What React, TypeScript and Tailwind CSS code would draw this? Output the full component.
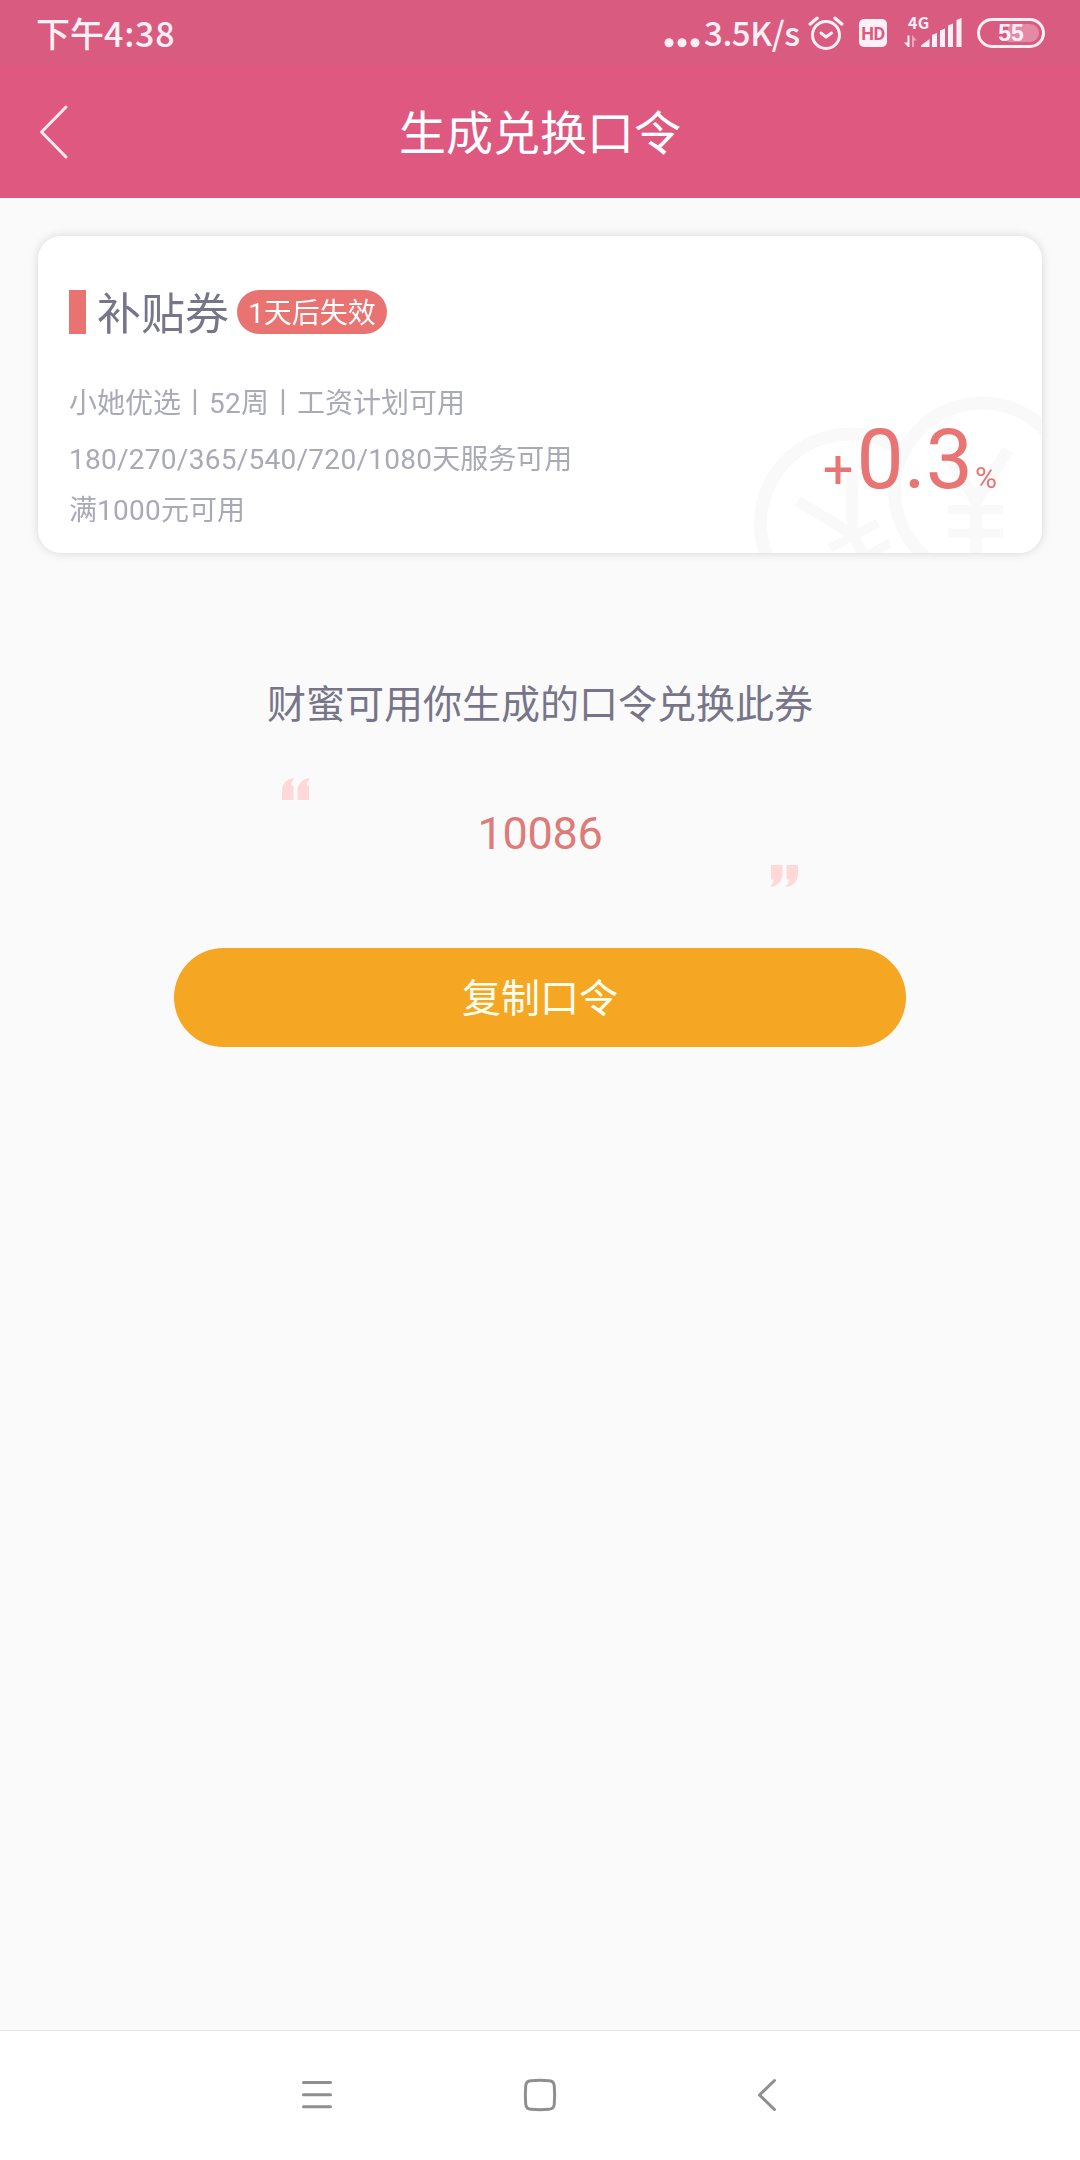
import React from "react";

const sans = "font-[Roboto,'Noto_Sans_CJK_SC',sans-serif]";

function StatusBar() {
  return (
    <div className="flex h-[66px] items-start bg-[#d95c80] pl-[36px] pr-[35px] font-['Noto_Sans_CJK_SC',sans-serif] font-medium text-[#fff0f6]">
      <div className="mt-[9px] text-[34px] leading-[48px]">
        下午<span className="tracking-[0.8px]">4:38</span>
      </div>
      <svg className="ml-auto mr-[4px] mt-[38px] h-[10px] w-[36px]" viewBox="0 0 36 10" fill="currentColor">
        <circle cx="5" cy="4.7" r="4.5" />
        <circle cx="18" cy="4.7" r="4.5" />
        <circle cx="31" cy="4.7" r="4.5" />
      </svg>
      <div className="mt-[8px] w-[96px] whitespace-nowrap text-[33px] leading-[48px] tracking-[-0.4px]">3.5K/s</div>
      <svg className="ml-[8px] mt-[15px] h-[36px] w-[36px]" viewBox="0 0 36 36" fill="none" stroke="currentColor" strokeWidth="3" strokeLinecap="round" strokeLinejoin="round">
        <circle cx="18" cy="20" r="13.5" />
        <path d="M2.2 9 L9 3.2 M33.8 9 L27 3.2" strokeWidth="3.4" />
        <path d="M13 18 L18 22 L23.5 18" />
      </svg>
      <div className="ml-[15px] mt-[19px] flex h-[28px] w-[28px] items-center justify-center rounded-[5px] bg-[#fff0f6] pt-px font-[Roboto,sans-serif] text-[18px] font-bold leading-none tracking-[-0.4px] text-[#d95c80]">HD</div>
      <div className="ml-[17px] mt-[16px] flex h-[32px] w-[58px] flex-col">
        <div className="ml-[4px] h-[13px] font-['Noto_Sans_CJK_SC',sans-serif] text-[16px] font-bold leading-[12px] tracking-[0.4px]">4G</div>
        <svg className="-mt-[12px] h-[32px] w-[58px] shrink-0" viewBox="0 0 58 32" fill="currentColor">
          <path d="M17 31 v-1.5 L25.5 23 V31Z M28 31V19l5-2v14Z M36 31V14.5l5-2V31Z M44 31V9.5l5-2V31Z M52.5 31V4l5-2V31Z" />
          <path d="M3.5 19.5h2V31h-1.5L0 26.5h3.5Z" />
          <path d="M8 31V19l5 5.5h-3V31Z" opacity=".5" />
        </svg>
      </div>
      <div className="ml-[15px] mt-[18px] flex h-[30px] w-[68px] items-center rounded-full border-[3px] border-[#fff0f6] p-[3px]">
        <div className="flex h-[18px] w-full items-center justify-center rounded-full bg-gradient-to-r from-transparent from-45% to-[#e58aa6] to-45% pt-px font-['Liberation_Sans',sans-serif] text-[23px] font-bold leading-none">55</div>
      </div>
    </div>
  );
}

function Header() {
  return (
    <header className="grid h-[132px] grid-cols-[120px_1fr_120px] items-center bg-[#df5880] text-white">
      <svg className="ml-[37px] h-[56px] w-[32px]" viewBox="0 0 32 56" fill="none" stroke="#ffeaf2" strokeWidth="3" strokeLinecap="round" strokeLinejoin="round">
        <path d="M29 3 L4.5 28 L29 53" />
      </svg>
      <h1 className="pt-[4px] text-center text-[47px] leading-[60px]">生成兑换口令</h1>
    </header>
  );
}

function Coins() {
  return (
    <svg className="absolute bottom-0 right-0 h-[166px] w-[292px]" viewBox="750 386 292 166" fill="none" stroke="#f9f9f9" strokeWidth="13">
      <circle cx="850" cy="522.500" r="89.500" />
      <path d="M852 470V533 M798 500L852 533L874 572" strokeWidth="11" />
      <path d="M830 547L878 522 M842 568L890 542" strokeWidth="9" />
      <circle cx="982" cy="489.500" r="87.500" fill="#fff" />
      <path d="M945 449L976 500L1008 449 M976 498V556" strokeWidth="12" />
      <path d="M948 508.500H1003 M948 532H1003" strokeWidth="9" />
    </svg>
  );
}

function Digits({ children }: { children: string }) {
  return <span className="tracking-[0.27px]">{children}</span>;
}

function Coupon() {
  return (
    <section className="relative ml-[38px] mt-[38px] h-[317px] w-[1004px] overflow-hidden rounded-[23px] bg-white pl-[31px] pt-[54px]">
      <Coins />
      <div className="relative flex h-[44px] items-center">
        <div className="h-[44px] w-[17px] bg-[#e97371]" />
        <h2 className="ml-[11px] w-[132px] whitespace-nowrap pt-[5px] text-[44px] leading-[44px] text-[#76758a]">补贴券</h2>
        <div className="ml-[8px] flex h-[44px] w-[150px] items-center justify-center rounded-full bg-[#e97371] pt-[3px] text-[28px] leading-none text-white">1天后失效</div>
      </div>
      <div className="relative flex justify-between pr-[45px]">
        <div className="mt-[43px] text-[28px] text-[#a9a9b7]">
          <p className="h-[54px] leading-[54px]">小她优选丨<Digits>52</Digits>周丨工资计划可用</p>
          <p className="h-[53px] leading-[57px]"><Digits>180/270/365/540/720/1080</Digits>天服务可用</p>
          <p className="h-[53px] leading-[53px]">满<Digits>1000</Digits>元可用</p>
        </div>
        <div className="mt-[76px] flex h-[100px] items-baseline font-[Roboto,sans-serif] leading-[100px] text-[#e87473]">
          <span className="mr-[3px] text-[54px]">+</span>
          <span className="text-[84px]">0.3</span>
          <span className="ml-[2px] text-[30px]">%</span>
        </div>
      </div>
    </section>
  );
}

function QuoteMark({ className }: { className: string }) {
  return (
    <svg className={className} viewBox="0 0 27 22" fill="#ffd8d7">
      <path d="M0 22V12Q1 2 11.500 0V2Q9 4 9 7L11.500 8V22Z M15.500 22V12Q16.500 2 27 0V2Q24.500 4 24.500 7L27 8V22Z" />
    </svg>
  );
}

function Redeem() {
  return (
    <section className="flex flex-col items-center pt-[122px]">
      <p className="h-[57px] text-[39px] leading-[60px] text-[#76758a]">财蜜可用你生成的口令兑换此券</p>
      <div className="mt-[46px] flex h-[109px] w-[516px] items-center justify-between">
        <QuoteMark className="h-[22px] w-[27px] self-start" />
        <span className="pt-[3px] text-[45px] leading-[50px] tracking-[-0.3px] text-[#de7a78]">10086</span>
        <QuoteMark className="h-[22px] w-[27px] rotate-180 self-end" />
      </div>
      <button className="mt-[61px] h-[99px] w-[732px] rounded-full bg-[#f5a623] pt-[4px] text-[39px] leading-[95px] text-[#fffff0]">复制口令</button>
    </section>
  );
}

function NavBar() {
  return (
    <nav className="mt-auto grid h-[130px] grid-cols-[1fr_34px_1fr] items-center border-t border-[#e4e4e4] bg-white pb-[2px] text-[#8f8f8f]">
      <svg className="ml-[301px] h-[34px] w-[32px]" viewBox="0 0 32 34" stroke="currentColor" strokeWidth="3" strokeLinecap="round">
        <path d="M2.500 4.500H29.500 M2.500 16.800H29.500 M2.500 28.800H29.500" />
      </svg>
      <svg className="h-[34px] w-[34px]" viewBox="0 0 34 34" fill="none" stroke="currentColor" strokeWidth="3">
        <path d="M8 2.700Q17 2 26 2.700Q31 3 31.300 8Q32 17 31.300 26Q31 31 26 31.300Q17 32 8 31.300Q3 31 2.700 26Q2 17 2.700 8Q3 3 8 2.700Z" />
      </svg>
      <svg className="mr-[303px] h-[34px] w-[20px] justify-self-end" viewBox="0 0 20 34" fill="none" stroke="currentColor" strokeWidth="3" strokeLinecap="round" strokeLinejoin="round">
        <path d="M17.500 2.500L2.500 17L17.500 31.500" />
      </svg>
    </nav>
  );
}

export default function App() {
  return (
    <main className={`flex h-[2160px] w-[1080px] flex-col overflow-hidden bg-[#fafafa] ${sans}`}>
      <StatusBar />
      <Header />
      <div className="[filter:drop-shadow(0_0_5px_rgba(0,0,0,0.14))]">
        <Coupon />
      </div>
      <Redeem />
      <NavBar />
    </main>
  );
}
